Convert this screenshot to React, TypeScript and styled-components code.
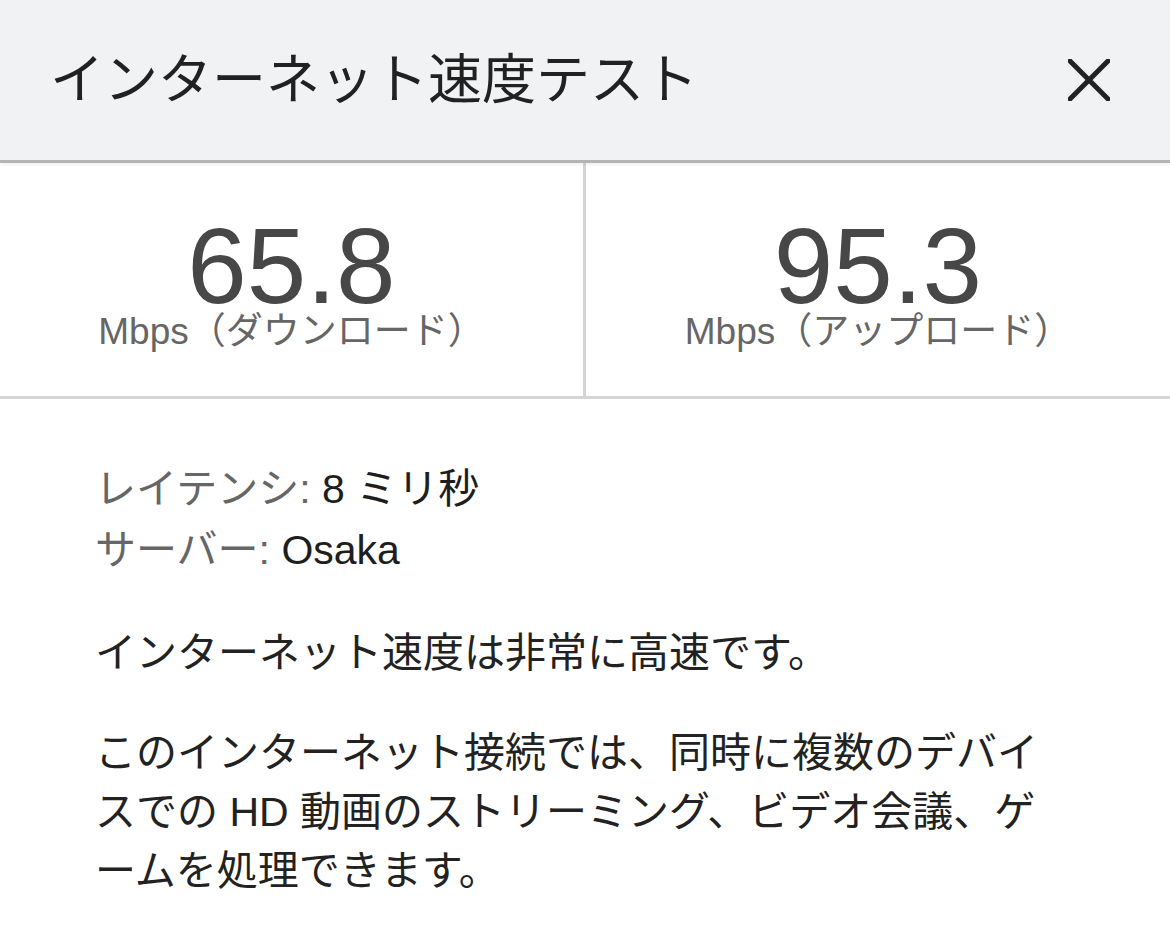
import React from "react"
import styled, { createGlobalStyle } from "styled-components"

const GlobalStyle = createGlobalStyle`
  html, body {
    margin: 0;
    padding: 0;
    background: #ffffff;
  }
  body {
    font-family: "Liberation Sans", "Noto Sans CJK JP", sans-serif;
    color: #222222;
  }
`

const Page = styled.div`
  width: 1170px;
  min-height: 930px;
  background: #ffffff;
`

const Header = styled.header`
  height: 160px;
  display: flex;
  align-items: center;
  justify-content: space-between;
  padding: 0 60px 0 50px;
  background: #f1f2f4;
  border-bottom: 3px solid #b4b4b4;
  box-shadow: 0 2px 3px rgba(0, 0, 0, 0.06);
  position: relative;
  z-index: 1;
`

const Title = styled.h1`
  margin: 0;
  font-size: 54px;
  font-weight: 400;
  color: #212121;
  line-height: 1;
`

const CloseButton = styled.button`
  width: 42px;
  height: 42px;
  padding: 0;
  border: none;
  background: transparent;
  display: flex;
  align-items: center;
  justify-content: center;
  cursor: pointer;
  svg {
    display: block;
  }
`

const Stats = styled.section`
  display: grid;
  grid-template-columns: 583px 1fr;
  border-bottom: 3px solid #d4d4d4;
`

const StatCell = styled.div<{ $divider?: boolean }>`
  height: 233px;
  box-sizing: border-box;
  padding-top: 60px;
  display: flex;
  flex-direction: column;
  align-items: center;
  border-left: ${(p) => (p.$divider ? "3px solid #d4d4d4" : "none")};
`

const StatValue = styled.div`
  font-size: 107px;
  line-height: 86px;
  color: #474747;
`

const StatUnit = styled.div`
  margin-top: 3px;
  font-size: 37px;
  line-height: 40px;
  color: #666666;
`

const Body = styled.section`
  padding: 60px 0 0 95px;
  font-size: 41px;
`

const InfoRow = styled.div`
  line-height: 61px;
  color: #1e1e1e;
`

const InfoLabel = styled.span`
  color: #666666;
`

const Summary = styled.p`
  margin: 42px 0 0;
  line-height: 61px;
  color: #222222;
`

const Detail = styled.p`
  margin: 40px 0 0;
  line-height: 59px;
  color: #222222;
`

function CloseIcon() {
  return (
    <svg width="42" height="42" viewBox="0 0 42 42">
      <path
        d="M2 2 L40 40 M40 2 L2 40"
        stroke="#222222"
        strokeWidth="5"
        strokeLinecap="square"
        fill="none"
      />
    </svg>
  )
}

function App() {
  return (
    <Page>
      <GlobalStyle />
      <Header>
        <Title>インターネット速度テスト</Title>
        <CloseButton aria-label="閉じる">
          <CloseIcon />
        </CloseButton>
      </Header>

      <Stats>
        <StatCell>
          <StatValue>65.8</StatValue>
          <StatUnit>Mbps（ダウンロード）</StatUnit>
        </StatCell>
        <StatCell $divider>
          <StatValue>95.3</StatValue>
          <StatUnit>Mbps（アップロード）</StatUnit>
        </StatCell>
      </Stats>

      <Body>
        <InfoRow>
          <InfoLabel>レイテンシ:</InfoLabel> 8 ミリ秒
        </InfoRow>
        <InfoRow>
          <InfoLabel>サーバー:</InfoLabel> Osaka
        </InfoRow>
        <Summary>インターネット速度は非常に高速です。</Summary>
        <Detail>
          このインターネット接続では、同時に複数のデバイ
          <br />
          スでの HD 動画のストリーミング、ビデオ会議、ゲ
          <br />
          ームを処理できます。
        </Detail>
      </Body>
    </Page>
  )
}

export default App
